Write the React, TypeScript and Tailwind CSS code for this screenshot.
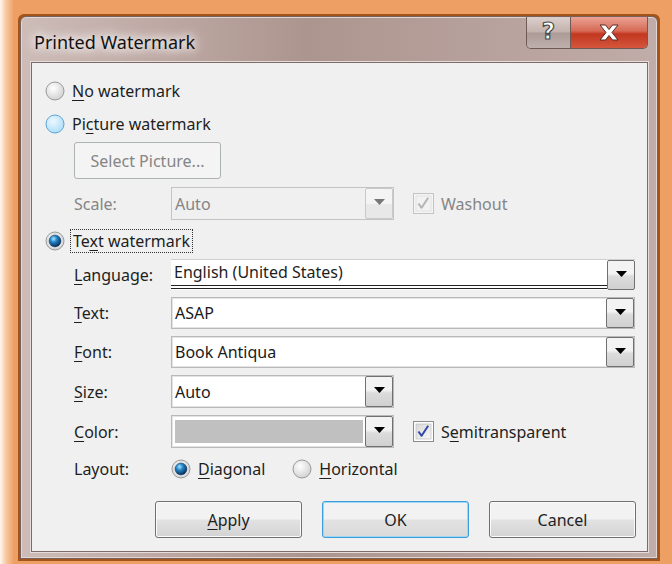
import React from 'react';

type RadioState = 'off' | 'hover' | 'on';

function Radio({ state }: { state: RadioState }) {
  return (
    <svg width="20" height="20" viewBox="0 0 20 20" className="shrink-0">
      <defs>
        <radialGradient id="rOff" cx="40%" cy="35%" r="70%">
          <stop offset="0%" stopColor="#ffffff" />
          <stop offset="100%" stopColor="#cfcfcf" />
        </radialGradient>
        <radialGradient id="rHover" cx="40%" cy="35%" r="70%">
          <stop offset="0%" stopColor="#eef8ff" />
          <stop offset="100%" stopColor="#a9dcfa" />
        </radialGradient>
        <radialGradient id="rDot" cx="38%" cy="32%" r="70%">
          <stop offset="0%" stopColor="#a8e8ff" />
          <stop offset="40%" stopColor="#2484c8" />
          <stop offset="100%" stopColor="#0a2a52" />
        </radialGradient>
      </defs>
      <circle cx="10" cy="10" r="9" fill={state === 'hover' ? 'url(#rHover)' : 'url(#rOff)'} stroke={state === 'hover' ? '#5fa6d6' : '#9a9a9a'} strokeWidth="1" />
      {state === 'on' && (
        <>
          <circle cx="10" cy="10" r="7.6" fill="#f4f4f4" stroke="#c8c8c8" strokeWidth="0.5" />
          <circle cx="10" cy="10" r="6" fill="url(#rDot)" stroke="#173c62" strokeWidth="0.6" />
        </>
      )}
    </svg>
  );
}

function Check({ disabled }: { disabled?: boolean }) {
  return (
    <svg width="21" height="21" viewBox="0 0 21 21" className="shrink-0">
      <defs>
        <linearGradient id="cFill" x1="0" y1="0" x2="1" y2="1">
          <stop offset="0%" stopColor="#d9d9d9" />
          <stop offset="100%" stopColor="#f7f7f7" />
        </linearGradient>
      </defs>
      <rect x="0.5" y="0.5" width="20" height="20" fill={disabled ? '#f4f4f4' : '#fdfdfd'} stroke={disabled ? '#c4c4c4' : '#8c8c8c'} />
      <rect x="3" y="3" width="15" height="15" fill={disabled ? '#f2f2f2' : 'url(#cFill)'} stroke={disabled ? '#d6d6d6' : '#b6b6b6'} strokeWidth="0.6" />
      <path d="M5.5 10.5 L8.6 14.8 L15.2 4.8" fill="none" stroke={disabled ? '#b4b4b4' : '#3348a8'} strokeWidth="2" strokeLinejoin="round" />
    </svg>
  );
}

function Arrow({ disabled }: { disabled?: boolean }) {
  return (
    <svg width="11" height="6" viewBox="0 0 11 6">
      <path d="M0 0 H11 L5.5 6 Z" fill={disabled ? '#777' : '#000'} />
    </svg>
  );
}

function DropButton({ disabled }: { disabled?: boolean }) {
  return (
    <div
      className={`w-[28px] self-stretch flex items-center justify-center border rounded-[2px] ${
        disabled
          ? 'border-[#c9c9c9] bg-[linear-gradient(#f4f4f4_50%,#e8e8e8_50%)]'
          : 'border-[#707070] bg-[linear-gradient(#f3f3f3_45%,#dcdcdc_55%,#d0d0d0)]'
      }`}
    >
      <div className="-mt-[3px]">
        <Arrow disabled={disabled} />
      </div>
    </div>
  );
}

function Combo({ value, w, children }: { value?: string; w: string; children?: React.ReactNode }) {
  return (
    <div className={`${w} h-full flex bg-white border border-[#b9b9b9] shadow-[inset_0_0_0_1px_#e3e3e3]`}>
      <div className="flex-1 flex items-center pl-[3px] text-[#1a1a1a]">{children ?? value}</div>
      <DropButton />
    </div>
  );
}

function Label({ children }: { children: React.ReactNode }) {
  return <div className="w-[97px] shrink-0 text-[#1e1e1e]">{children}</div>;
}

function Key({ children }: { children: React.ReactNode }) {
  return <span className="underline decoration-1 underline-offset-[3px]">{children}</span>;
}

function PushButton({ children, focused }: { children: React.ReactNode; focused?: boolean }) {
  return (
    <div
      className={`w-[147px] h-[37px] flex items-center justify-center rounded-[3px] text-[#1e1e1e] ${
        focused
          ? 'border border-[#3c9ddd] shadow-[inset_0_0_0_1px_#9fd6f4] bg-[linear-gradient(#f2f2f2_48%,#e2e2e2_52%,#dadada)]'
          : 'border border-[#707070] shadow-[inset_0_0_0_1px_#fbfbfb] bg-[linear-gradient(#f2f2f2_48%,#e2e2e2_52%,#d3d3d3)]'
      }`}
    >
      {children}
    </div>
  );
}

export default function App() {
  return (
    <div className="w-[672px] h-[564px] overflow-hidden bg-[#eea064] bg-[linear-gradient(90deg,#fff7ef_0px,#f6c9a2_6px,#eea064_14px,#eea064_100%)] pt-[14px] pl-[18px] font-['Noto_Sans',sans-serif] text-[16px]">
      {/* dark rim around the glass frame */}
      <div className="w-[642px] h-[547px] border-2 border-[#a4541a] rounded-t-[6px] bg-[#a4541a]">
        <div className="w-full h-full flex flex-col rounded-t-[6px] border border-[#7a625c] shadow-[inset_0_0_0_1px_#e2d6d3] bg-[linear-gradient(90deg,#cdbcb8_0%,#bfaaa5_20%,#ad958f_45%,#b8a29d_75%,#c0aca8_100%)]">
          {/* title bar */}
          <div className="h-[45px] shrink-0 flex items-start">
            <div className="pl-[13px] pt-[12px] text-[18px] text-[#111] [text-shadow:0_0_8px_#fff,0_0_12px_#fff,0_0_16px_#f3ecea]">
              Printed Watermark
            </div>
            <div className="ml-auto mr-[9px] flex h-[32px] rounded-b-[5px] border border-t-0 border-[#6e5a56] overflow-hidden">
              <div className="w-[44px] flex items-center justify-center border-r border-[#6e5a56] bg-[linear-gradient(#dccfcc_0%,#c3b2ae_48%,#ad9a96_52%,#bfb0ad_100%)]">
                <span className="font-['DejaVu_Sans',sans-serif] font-bold text-[23px] leading-none text-white [-webkit-text-stroke:1.2px_#4a4a4a] -mt-[2px]">?</span>
              </div>
              <div className="w-[76px] flex items-center justify-center bg-[linear-gradient(#eaa294_0%,#d66a55_45%,#c2371f_55%,#d4563c_100%)]">
                <svg width="22" height="17" viewBox="0 0 22 17">
                  <path
                    d="M2 1 H7.5 L11 5.5 L14.5 1 H20 L14 8.5 L20 16 H14.5 L11 11.5 L7.5 16 H2 L8 8.5 Z"
                    fill="#fff"
                    stroke="#5a2a22"
                    strokeWidth="1"
                    strokeLinejoin="round"
                  />
                </svg>
              </div>
            </div>
          </div>

          {/* client area */}
          <div className="flex-1 ml-[10px] mr-[9px] mb-[6px] border border-[#7c6b68] shadow-[0_0_0_1px_#e6dcda] bg-[#f0f0f0] flex flex-col pl-[13px] pt-[11px] text-[#1e1e1e]">
            <div className="h-[34px] flex items-center gap-[7px]">
              <Radio state="off" />
              <span><Key>N</Key>o watermark</span>
            </div>
            <div className="h-[32px] flex items-center gap-[7px]">
              <Radio state="hover" />
              <span>Pi<Key>c</Key>ture watermark</span>
            </div>

            <div className="ml-[29px] mt-[2px] w-[147px] h-[37px] flex items-center justify-center rounded-[3px] border border-[#adb2b5] bg-[#f4f4f4] text-[#858585]">
              Select Picture...
            </div>

            <div className="ml-[29px] mt-[8px] h-[33px] flex items-center text-[#858585]">
              <Label><span className="text-[#858585]">Scale:</span></Label>
              <div className="w-[223px] h-full flex bg-[#f0f0f0] border border-[#c4c4c4]">
                <div className="flex-1 flex items-center pl-[3px]">Auto</div>
                <DropButton disabled />
              </div>
              <div className="ml-[19px] flex items-center gap-[7px]">
                <Check disabled />
                <span>Washout</span>
              </div>
            </div>

            <div className="mt-[6px] h-[30px] flex items-center gap-[5px]">
              <Radio state="on" />
              <span className="border border-dotted border-[#333] px-[2px] leading-[22px]">Te<Key>x</Key>t watermark</span>
            </div>

            <div className="ml-[29px] mt-[3px] h-[31px] flex items-center">
              <Label><Key>L</Key>anguage:</Label>
              <div className="w-[464px] h-full flex bg-white border-t border-[#d0d0d0]">
                <div className="flex-1 flex flex-col justify-end">
                  <div className="pl-[3px] pb-[1px] leading-[24px]">English (United States)</div>
                  <div className="h-[4px] border-y border-[#222] mb-[1px]" />
                </div>
                <DropButton />
              </div>
            </div>

            <div className="ml-[29px] mt-[7px] h-[32px] flex items-center">
              <Label><Key>T</Key>ext:</Label>
              <Combo w="w-[464px]" value="ASAP" />
            </div>
            <div className="ml-[29px] mt-[7px] h-[32px] flex items-center">
              <Label><Key>F</Key>ont:</Label>
              <Combo w="w-[464px]" value="Book Antiqua" />
            </div>
            <div className="ml-[29px] mt-[7px] h-[33px] flex items-center">
              <Label><Key>S</Key>ize:</Label>
              <Combo w="w-[223px]" value="Auto" />
            </div>
            <div className="ml-[29px] mt-[7px] h-[33px] flex items-center">
              <Label><Key>C</Key>olor:</Label>
              <Combo w="w-[223px]">
                <div className="w-full h-[23px] mr-[2px] bg-[#c0c0c0]" />
              </Combo>
              <div className="ml-[19px] flex items-center gap-[7px]">
                <Check />
                <span>S<Key>e</Key>mitransparent</span>
              </div>
            </div>

            <div className="ml-[29px] mt-[8px] h-[26px] flex items-center">
              <Label>Layout:</Label>
              <div className="flex items-center gap-[7px]">
                <Radio state="on" />
                <span><Key>D</Key>iagonal</span>
              </div>
              <div className="ml-[27px] flex items-center gap-[7px]">
                <Radio state="off" />
                <span><Key>H</Key>orizontal</span>
              </div>
            </div>

            <div className="ml-[110px] mt-[19px] flex gap-[20px]">
              <PushButton><span><Key>A</Key>pply</span></PushButton>
              <PushButton focused>OK</PushButton>
              <PushButton>Cancel</PushButton>
            </div>
          </div>
        </div>
      </div>
    </div>
  );
}
